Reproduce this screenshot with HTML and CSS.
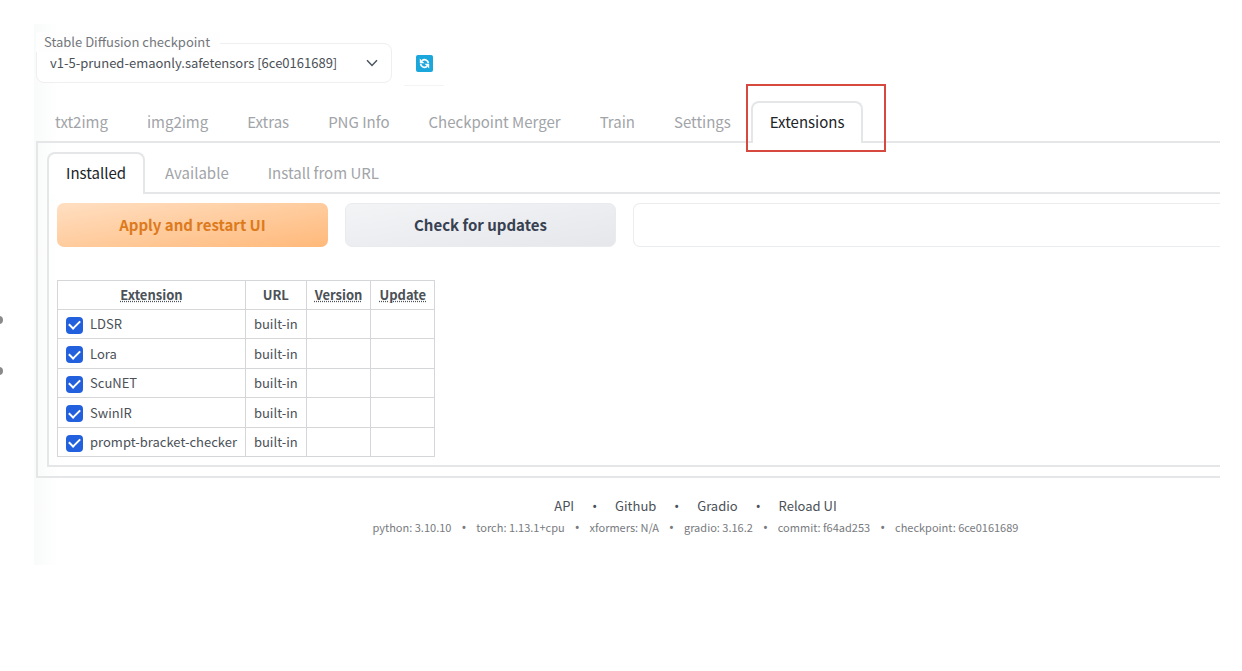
FILE: index.html
```html
<!DOCTYPE html>
<html lang="en">
<head>
<meta charset="utf-8">
<title>Stable Diffusion</title>
<link rel="stylesheet" href="styles.css">
</head>
<body>
<span class="edge-dot edge-dot-first"></span>
<span class="edge-dot edge-dot-second"></span>
<main class="app">
  <div class="quick">
    <div class="checkpoint">
      <label class="checkpoint-label" for="checkpoint">Stable Diffusion checkpoint</label>
      <select class="checkpoint-select" id="checkpoint">
        <option>v1-5-pruned-emaonly.safetensors [6ce0161689]</option>
      </select>
      <svg class="chevron" viewBox="0 0 12 8" aria-hidden="true"><path d="M1 1.2 6 6.4 11 1.2" fill="none" stroke="#4b5563" stroke-width="1.5"/></svg>
    </div>
    <button class="refresh" type="button" aria-label="Refresh checkpoints">
      <svg class="refresh-icon" viewBox="0 0 17 17" aria-hidden="true">
        <rect width="17" height="17" rx="2" fill="#1ba6dc"/>
        <g fill="none" stroke="#fff" stroke-width="1.7">
          <path d="M12.4 8.2C12 5 8.500 3.700 6 5.700"/>
          <path d="M4.600 8.800C5 12 8.500 13.300 11 11.300"/>
        </g>
        <path d="M3.800 3.600v4.600h4.600zM13.200 13.400V8.800H8.600z" fill="#fff"/>
      </svg>
    </button>
  </div>

  <nav class="tabs">
    <button class="tab" type="button">txt2img</button>
    <button class="tab" type="button">img2img</button>
    <button class="tab" type="button">Extras</button>
    <button class="tab" type="button">PNG Info</button>
    <button class="tab" type="button">Checkpoint Merger</button>
    <button class="tab" type="button">Train</button>
    <button class="tab" type="button">Settings</button>
    <div class="marked">
      <button class="tab tab-active" type="button">Extensions</button>
      <span class="marker"></span>
    </div>
  </nav>

  <section class="panel">
    <nav class="tabs">
      <button class="tab tab-active" type="button">Installed</button>
      <button class="tab" type="button">Available</button>
      <button class="tab" type="button">Install from URL</button>
    </nav>
    <div class="panel-inner">
      <div class="actions">
        <button class="action action-primary" type="button">Apply and restart UI</button>
        <button class="action" type="button">Check for updates</button>
        <input class="status" type="text" aria-label="Status">
      </div>
      <table class="extensions">
        <thead>
          <tr><th><abbr title="Extension name">Extension</abbr></th><th>URL</th><th><abbr title="Extension version">Version</abbr></th><th><abbr title="Available update">Update</abbr></th></tr>
        </thead>
        <tbody>
          <tr><td><label class="ext"><input class="check" type="checkbox" checked>LDSR</label></td><td>built-in</td><td></td><td></td></tr>
          <tr><td><label class="ext"><input class="check" type="checkbox" checked>Lora</label></td><td>built-in</td><td></td><td></td></tr>
          <tr><td><label class="ext"><input class="check" type="checkbox" checked>ScuNET</label></td><td>built-in</td><td></td><td></td></tr>
          <tr><td><label class="ext"><input class="check" type="checkbox" checked>SwinIR</label></td><td>built-in</td><td></td><td></td></tr>
          <tr><td><label class="ext"><input class="check" type="checkbox" checked>prompt-bracket-checker</label></td><td>built-in</td><td></td><td></td></tr>
        </tbody>
      </table>
    </div>
  </section>

  <footer class="footer">
    <div class="links">
      <a href="#api">API</a><span class="bullet">•</span><a href="#github">Github</a><span class="bullet">•</span><a href="#gradio">Gradio</a><span class="bullet">•</span><a href="#reload">Reload UI</a>
    </div>
    <div class="versions">
      <span>python: 3.10.10</span><span class="bullet">•</span><span>torch: 1.13.1+cpu</span><span class="bullet">•</span><span>xformers: N/A</span><span class="bullet">•</span><span>gradio: 3.16.2</span><span class="bullet">•</span><span>commit: f64ad253</span><span class="bullet">•</span><span>checkpoint: 6ce0161689</span>
    </div>
  </footer>
</main>
</body>
</html>
```
FILE: styles.css
```css
* { box-sizing: border-box; }

body {
  margin: 0;
  padding: 24px 22px 0 34px;
  background: #fff;
  color: #4b5157;
  font-family: "Noto Sans CJK SC", "Noto Sans", sans-serif;
  font-size: 13px;
  line-height: 20px;
}

button, input, select { font: inherit; color: inherit; margin: 0; }

.app {
  padding: 8px 0 28px 2px;
  background: linear-gradient(90deg, #f9fafa, #fff 24px);
}

.edge-dot {
  position: absolute;
  left: -5px;
  width: 8px;
  height: 8px;
  border-radius: 50%;
  background: #8a8a8a;
}
.edge-dot-first { top: 316px; }
.edge-dot-second { top: 367px; }

.quick {
  display: flex;
  align-items: flex-end;
  gap: 12px;
}

.checkpoint {
  position: relative;
  width: 356px;
  padding-top: 11px;
}
.checkpoint-label {
  position: absolute;
  top: 0;
  left: 0;
  padding: 0 10px 0 8px;
  background: #fefefe;
  color: #73777c;
}
.checkpoint-select {
  display: block;
  width: 100%;
  height: 40px;
  padding: 0 36px 0 13px;
  border: 1px solid #efeff0;
  border-radius: 8px;
  background: #fff;
  appearance: none;
}
.chevron {
  position: absolute;
  right: 14px;
  bottom: 16px;
  width: 12px;
  height: 8px;
}

.refresh {
  display: flex;
  align-items: center;
  justify-content: center;
  width: 40px;
  height: 44px;
  margin-bottom: -3px;
  padding: 0;
  border: 0;
  border-bottom: 1px solid #f4f4f5;
  background: transparent;
}
.refresh-icon { width: 17px; height: 17px; }

.tabs {
  display: flex;
  gap: 1px;
  box-shadow: inset 0 -2px #e5e6e8;
}
.app > .tabs { margin-top: 18px; }

.tab {
  height: 42px;
  padding: 0 17px 3px;
  border: 2px solid transparent;
  border-bottom: 0;
  border-radius: 8px 8px 0 0;
  background: transparent;
  color: #a1a4a8;
  font-size: 15px;
  line-height: 20px;
  white-space: nowrap;
}
.tab-active {
  border-color: #e5e6e8;
  background: #fff;
  color: #202327;
}

.marked { position: relative; display: flex; }
.marker {
  position: absolute;
  inset: -17px -23px -9px -5px;
  border: 2px solid #d5493f;
  pointer-events: none;
}

.panel {
  padding: 9px 0 9px 9px;
  border: 2px solid #e5e6e8;
  border-width: 0 0 2px 2px;
}
.panel-inner {
  padding: 9px 0 8px 8px;
  border: 2px solid #e5e6e8;
  border-width: 0 0 2px 2px;
}

.actions {
  display: grid;
  grid-template-columns: 6fr 6fr 13fr;
  gap: 17px;
}
.action {
  height: 44px;
  padding: 0;
  border: 1px solid #e9ebee;
  border-radius: 7px;
  background: linear-gradient(to bottom right, #f3f4f6, #e5e7eb);
  color: #374151;
  font-size: 15px;
  font-weight: 700;
}
.action-primary {
  border: 0;
  background: linear-gradient(to bottom right, #ffdfc2, #ffb97a);
  color: #dd7a1c;
}
.status {
  width: 100%;
  min-width: 0;
  border: 1px solid #ebecee;
  border-right: 0;
  border-radius: 7px 0 0 7px;
  background: #fff;
  padding: 0 12px;
}

.extensions {
  margin-top: 33px;
  border-collapse: collapse;
}
.extensions th, .extensions td {
  height: 29px;
  padding: 0 8px;
  border: 1px solid #d5d6d8;
}
.extensions tbody tr:nth-child(even) td { height: 30px; }
.extensions th { font-weight: 700; }
.extensions abbr { text-decoration: underline dotted; }
.ext { display: flex; align-items: center; gap: 7px; }
.check {
  width: 17px;
  height: 17px;
  margin-top: 2px;
  border-radius: 4px;
  appearance: none;
  background: #2360dd;
  display: grid;
  place-items: center;
}
.check::before {
  content: "";
  width: 9px;
  height: 5px;
  border: solid #fff;
  border-width: 0 0 2px 2px;
  transform: rotate(-45deg);
  margin-bottom: 3px;
}

.footer { margin-top: 18px; padding-left: 135px; }
.links, .versions {
  display: flex;
  justify-content: center;
}
.bullet { font-family: "Noto Sans", sans-serif; font-size: 13px; }
.links { gap: 18px; }
.links a { color: inherit; text-decoration: none; }
.versions { gap: 10px; margin-top: 1px; color: #777a7e; font-size: 11px; }
```
